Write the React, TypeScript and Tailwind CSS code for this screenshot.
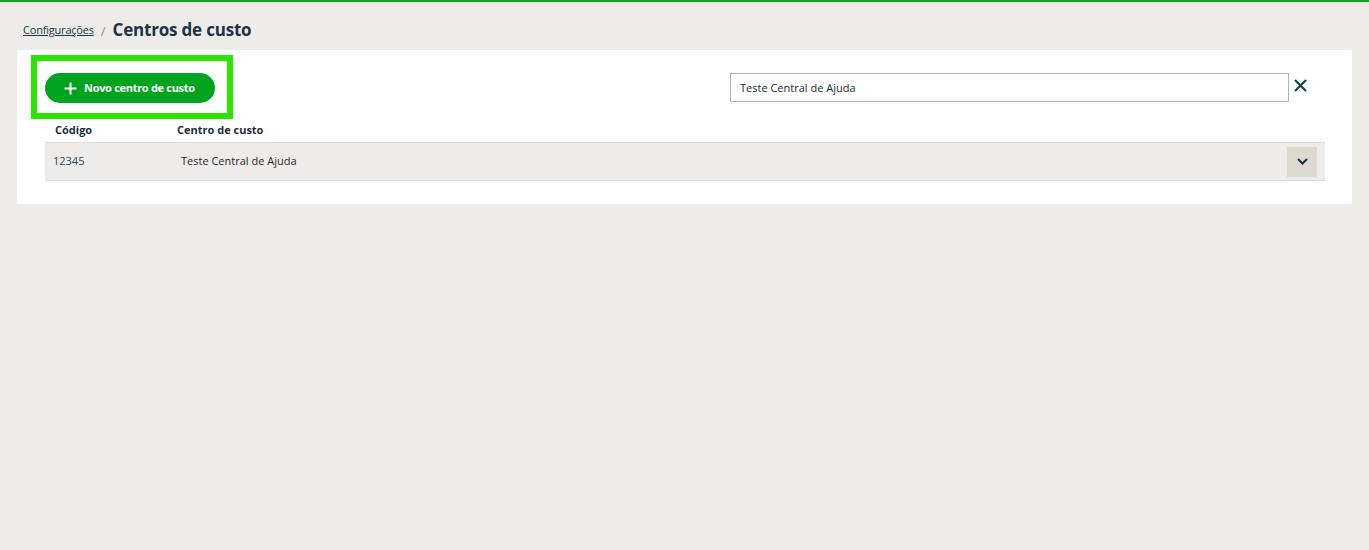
import React from "react";

const rows = [{ code: "12345", name: "Teste Central de Ajuda" }];

const App = () => {
  return (
    <div
      className="min-h-[550px] w-full bg-[#eeece8] border-t-2 border-[#0fa51e] text-[#1c2e3a]"
      style={{ fontFamily: '"Open Sans", "Noto Sans", sans-serif' }}
    >
      {/* breadcrumb */}
      <div className="flex items-baseline gap-[7px] pl-[23px] pt-[15px] h-[48px]">
        <a className="text-[11px] underline text-[#163a3f] tracking-[-0.2px] -translate-y-[2px]">Configurações</a>
        <span className="text-[13px] text-[#8a8f93]">/</span>
        <h1 className="text-[17px] font-bold text-[#1b3447] tracking-[-0.2px]">Centros de custo</h1>
      </div>

      {/* card */}
      <div className="mx-[17px] bg-white pt-[5px] pb-[23px]">
        <div className="flex items-start">
          <div className="ml-[14px] w-[202px] h-[64px] border-[6px] border-[#2ae500] pl-[8px] pt-[12px]">
            <button className="flex items-center gap-[7px] h-[30px] w-[170px] rounded-full bg-[#00a41e] pl-[19px] text-white text-[11px] font-bold tracking-[-0.3px]">
              <svg width="13" height="13" viewBox="0 0 13 13" fill="none" stroke="white" strokeWidth="2">
                <path d="M6.5 0.5v12M0.5 6.5h12" />
              </svg>
              Novo centro de custo
            </button>
          </div>
          <div className="flex-1" />
          <div className="flex items-center mt-[18px] mr-[45px]">
            <input
              readOnly
              value="Teste Central de Ajuda"
              className="w-[559px] h-[29px] border border-[#a8b5bf] px-[9px] text-[11px] text-[#1c2a33] outline-none"
            />
            <button className="ml-[4px] w-[14px] h-[14px] flex items-center justify-center -mt-[4px]">
              <svg width="13" height="13" viewBox="0 0 13 13" fill="none" stroke="#0b4a48" strokeWidth="2.2">
                <path d="M1 1l11 11M12 1L1 12" />
              </svg>
            </button>
          </div>
        </div>

        {/* table */}
        <div className="ml-[28px] mr-[27px]">
          <div className="flex h-[23px] items-center text-[11px] font-bold text-[#1c2e3a]">
            <div className="w-[132px] pl-[10px]">Código</div>
            <div>Centro de custo</div>
          </div>
          {rows.map((r) => (
            <div
              key={r.code}
              className="flex items-center h-[39px] bg-[#eeece8] border-y border-[#dcdcdc] text-[11px]"
            >
              <div className="w-[136px] pl-[8px] text-[#1d4a5e]">{r.code}</div>
              <div className="flex-1 text-[#1f2b33]">{r.name}</div>
              <button className="mr-[8px] w-[30px] h-[30px] bg-[#dcd9d3] flex items-center justify-center">
                <svg width="11" height="7" viewBox="0 0 11 7" fill="none" stroke="#1b2f3d" strokeWidth="2">
                  <path d="M1 1l4.5 4.5L10 1" />
                </svg>
              </button>
            </div>
          ))}
        </div>
      </div>
    </div>
  );
};

export default App;
